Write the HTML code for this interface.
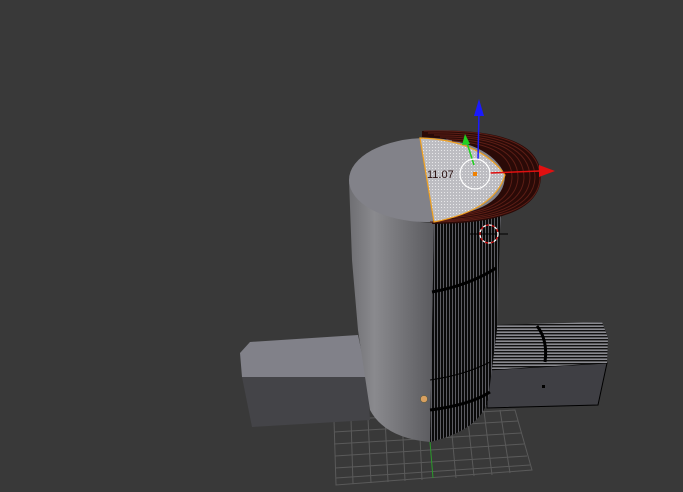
<!DOCTYPE html>
<html><head><meta charset="utf-8"><style>
html,body{margin:0;padding:0;background:#393939;width:683px;height:492px;overflow:hidden}
svg{display:block}
</style></head><body>
<svg width="683" height="492" viewBox="0 0 683 492" xmlns="http://www.w3.org/2000/svg">
<defs>
<linearGradient id="cyl" x1="0" x2="1" y1="0" y2="0">
<stop offset="0" stop-color="#6e6e72"/><stop offset="0.3" stop-color="#8a8a8e"/><stop offset="1" stop-color="#5a5a5e"/>
</linearGradient>
<pattern id="vl" width="3" height="4" patternUnits="userSpaceOnUse">
<rect width="3" height="4" fill="#5c5c62"/><rect width="2" height="4" fill="#0a0a0a"/>
</pattern>
<pattern id="hl" width="4" height="3" patternUnits="userSpaceOnUse">
<rect width="4" height="3" fill="#8a8a90"/><rect width="4" height="1.4" fill="#111"/>
</pattern>
<pattern id="dots" width="3" height="3" patternUnits="userSpaceOnUse">
<rect width="3" height="3" fill="#bdbdc2"/><rect width="1" height="1" fill="#e8e8ea"/>
</pattern>
</defs>
<g stroke="#5a5a5a" stroke-width="1" fill="none">
<path d="M334 420 L515 410 L532 470 L336 485 Z"/>
<path d="M334 432 L518 421 M334 444 L521 433 M335 456 L524 444 M335 468 L527 456 M336 478 L530 465"/>
<path d="M351 419 L353 484 M368 418 L371 483 M385 417 L388 482 M402 416 L405 481 M419 415 L422 480 M450 413 L456 478 M467 412 L474 476 M484 411 L492 475 M500 410 L510 473"/>
</g>
<line x1="430" y1="442" x2="433" y2="478" stroke="#2a9a2a" stroke-width="1"/>
<polygon points="240,353 250,342 358,335 367,377 242,377" fill="#818189"/>
<polygon points="242,377 367,377 370,420 252,427" fill="#444448"/>
<polygon points="487,370 607,363 598,405 487,408" fill="#3f3f44" stroke="#000" stroke-width="1"/>
<polygon points="490,325 602,322 608,338 607,363 487,370" fill="url(#hl)"/>
<path d="M537 326 Q548 340 545 362" stroke="#000" stroke-width="3" fill="none"/>
<rect x="542" y="385" width="3" height="3" fill="#000"/>
<path d="M349 180 L352 260 L358 330 L370 410 Q385 438 430 442 L434 223 Q380 222 349 180 Z" fill="url(#cyl)"/>
<path d="M434 223 L505 175 L500 230 L497 330 L488 400 Q480 430 430 442 Z" fill="url(#vl)"/>
<path d="M432 292 Q470 285 496 268" stroke="#000" stroke-width="3" fill="none"/>
<path d="M430 410 Q470 405 490 392" stroke="#000" stroke-width="3" fill="none"/>
<path d="M430 380 Q465 375 490 362" stroke="#000" stroke-width="1" fill="none"/>
<circle cx="424" cy="399" r="3.5" fill="#d8a060" stroke="#553" stroke-width="0.5"/>
<ellipse cx="427" cy="180" rx="78" ry="42" fill="#828289"/>
<!-- torus band -->
<path d="M422 131 Q542 126 541 178 Q538 224 432 224 L434 218 Q505 212 505 175 Q490 140 422 137 Z" fill="#2a0a07"/>
<g fill="none" stroke="#5c1e16" stroke-width="1">
<path d="M424 131 Q540 128 540 178 Q538 222 430 222"/>
<path d="M428 133 Q535 131 535 178 Q533 219 436 221"/>
<path d="M434 135 Q530 134 530 178 Q528 216 442 220"/>
<path d="M440 137 Q524 136 524 178 Q522 213 448 218"/>
<path d="M446 139 Q518 140 518 178 Q516 210 455 216"/>
<path d="M452 141 Q512 144 512 178 Q510 207 462 214"/>
</g>
<path d="M420 138 Q480 140 505 175 Q495 210 434 222 Z" fill="url(#dots)" stroke="#f0a020" stroke-width="1.2"/>
<text x="427" y="178" font-family="Liberation Sans, sans-serif" font-size="11" fill="#2a1010">11.07</text>
<line x1="478" y1="160" x2="479" y2="112" stroke="#1a1aff" stroke-width="1.5"/>
<polygon points="479,99 474,116 484,116" fill="#1a1aff"/>
<line x1="474" y1="165" x2="467" y2="143" stroke="#20d020" stroke-width="1.5"/>
<polygon points="465,134 462,145 470,144" fill="#20d020"/>
<line x1="490" y1="173" x2="540" y2="171" stroke="#e01010" stroke-width="1.5"/>
<polygon points="555,171 539,165 539,177" fill="#e01010"/>
<circle cx="475" cy="174" r="15" fill="none" stroke="#fff" stroke-width="1.2"/>
<rect x="473" y="172" width="4" height="4" fill="#f08000"/>
<line x1="470" y1="234" x2="508" y2="234" stroke="#000" stroke-width="1"/>
<circle cx="489" cy="234" r="9" fill="none" stroke="#fff" stroke-width="1.3" stroke-dasharray="3 3"/>
<circle cx="489" cy="234" r="9" fill="none" stroke="#d01010" stroke-width="1.3" stroke-dasharray="3 3" stroke-dashoffset="3"/>
</svg>
</body></html>
